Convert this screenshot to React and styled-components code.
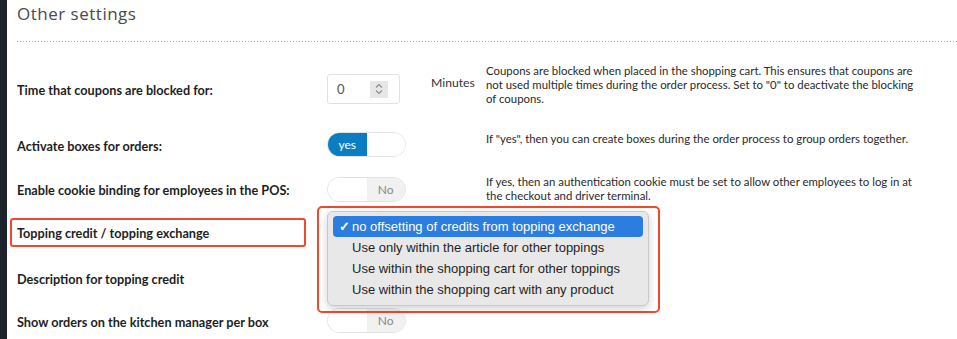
import React from "react";
import styled, { createGlobalStyle, css } from "styled-components";

const GlobalStyle = createGlobalStyle`
  html, body {
    margin: 0;
    padding: 0;
    background: #ffffff;
  }
  body {
    font-family: "Lato", "Liberation Sans", sans-serif;
    color: #222;
  }
`;

const SETTINGS = [
  {
    label: "Time that coupons are blocked for:",
    control: "number",
    unit: "Minutes",
    desc: 'Coupons are blocked when placed in the shopping cart. This ensures that coupons are not used multiple times during the order process. Set to "0" to deactivate the blocking of coupons.',
    height: 50,
  },
  {
    label: "Activate boxes for orders:",
    control: "on",
    desc: 'If "yes", then you can create boxes during the order process to group orders together.',
    height: 25,
  },
  {
    label: "Enable cookie binding for employees in the POS:",
    control: "off",
    desc: "If yes, then an authentication cookie must be set to allow other employees to log in at the checkout and driver terminal.",
    height: 25,
  },
  {
    label: "Topping credit / topping exchange",
    control: "select",
    highlight: true,
    height: 29,
  },
  {
    label: "Description for topping credit",
    control: null,
    height: 25,
  },
  {
    label: "Show orders on the kitchen manager per box",
    control: "off",
    height: 25,
  },
];

const OPTIONS = [
  "no offsetting of credits from topping exchange",
  "Use only within the article for other toppings",
  "Use within the shopping cart for other toppings",
  "Use within the shopping cart with any product",
];

const Spinner = () => (
  <StSpinner>
    <svg width="10" height="14" viewBox="0 0 10 14" fill="none">
      <path d="M2 5.5 L5 2.5 L8 5.5" stroke="#8a8a8a" strokeWidth="1.1" />
      <path d="M2 8.5 L5 11.5 L8 8.5" stroke="#8a8a8a" strokeWidth="1.1" />
    </svg>
  </StSpinner>
);

const Toggle = ({ on }) => (
  <StToggle>
    <StHalf $active={on}>{on ? "yes" : ""}</StHalf>
    <StHalf $off={!on}>{on ? "" : "No"}</StHalf>
  </StToggle>
);

const SelectPopup = () => (
  <StPopupMark>
    <StMenu>
      {OPTIONS.map((o, i) => (
        <StOption key={o} $selected={i === 0}>
          {i === 0 && <StCheck>✓</StCheck>}
          {o}
        </StOption>
      ))}
    </StMenu>
  </StPopupMark>
);

const renderControl = (control) => {
  if (control === "number")
    return (
      <StNumber>
        <span>0</span>
        <Spinner />
      </StNumber>
    );
  if (control === "on") return <Toggle on />;
  if (control === "off") return <Toggle on={false} />;
  if (control === "select") return <SelectPopup />;
  return null;
};

const App = () => {
  return (
    <StPage>
      <GlobalStyle />
      <StSidebar />
      <StMain>
        <StTitle>Other settings</StTitle>
        <StDivider />
        <StList>
          {SETTINGS.map((s) => (
            <StRow key={s.label} $height={s.height}>
              <StLabel $highlight={s.highlight}>{s.label}</StLabel>
              <StControl>{renderControl(s.control)}</StControl>
              <StUnit>{s.unit}</StUnit>
              <StDesc>{s.desc}</StDesc>
            </StRow>
          ))}
        </StList>
      </StMain>
    </StPage>
  );
};

export default App;

const StPage = styled.div`
  display: flex;
  width: 957px;
  height: 339px;
  overflow: hidden;
`;

const StSidebar = styled.div`
  width: 7px;
  flex-shrink: 0;
  background: #1d232b;
`;

const StMain = styled.div`
  flex: 1;
  padding-left: 10px;
`;

const StTitle = styled.div`
  font-family: "Open Sans", "Liberation Sans", sans-serif;
  font-size: 17px;
  letter-spacing: 0.5px;
  line-height: 20px;
  color: #4a4a4a;
  margin-top: 4px;
`;

const StDivider = styled.div`
  height: 1px;
  margin-top: 17px;
  background: repeating-linear-gradient(
    to right,
    #a8a8a8 0 1px,
    transparent 1px 3px
  );
`;

const StList = styled.div`
  display: flex;
  flex-direction: column;
  gap: 18px;
  margin-top: 22px;
`;

const StRow = styled.div`
  display: grid;
  grid-template-columns: 310px 104px 55px 436px;
  align-items: center;
  height: ${(p) => p.$height}px;
`;

const StLabel = styled.div`
  font-family: "Lato", sans-serif;
  font-weight: 700;
  font-size: 12.7px;
  color: #1e1e1e;
  padding-top: 2px;
  ${(p) =>
    p.$highlight &&
    css`
      margin-left: -7px;
      width: 296px;
      height: 29px;
      box-sizing: border-box;
      padding: 0 0 0 5px;
      border: 2px solid #f04a2c;
      border-radius: 3px;
      display: flex;
      align-items: center;
    `}
`;

const StControl = styled.div`
  position: relative;
  height: 100%;
  display: flex;
  align-items: center;
`;

const StUnit = styled.div`
  align-self: start;
  font-size: 12.2px;
  line-height: 16px;
  margin-top: 11px;
  color: #333;
`;

const StDesc = styled.div`
  align-self: start;
  font-size: 11.4px;
  line-height: 14px;
  margin-top: 0;
  color: #2a2a2a;
`;

const StNumber = styled.div`
  width: 73px;
  height: 30px;
  box-sizing: border-box;
  border: 1px solid #e1e1e1;
  border-radius: 3px;
  display: flex;
  align-items: center;
  padding-left: 9px;
  font-size: 13px;
  color: #555;

  span {
    width: 33px;
  }
`;

const StSpinner = styled.div`
  width: 18px;
  height: 17px;
  background: #e7e7e7;
  display: flex;
  align-items: center;
  justify-content: center;
`;

const StToggle = styled.div`
  width: 79px;
  height: 25px;
  box-sizing: border-box;
  border: 1px solid #e2e2e2;
  border-radius: 13px;
  overflow: hidden;
  display: flex;
`;

const StHalf = styled.div`
  width: 50%;
  display: flex;
  align-items: center;
  justify-content: center;
  font-size: 12px;
  background: ${(p) => (p.$active ? "#0a7dc3" : p.$off ? "#f1f1f1" : "#fff")};
  color: ${(p) => (p.$active ? "#fff" : "#888")};
`;

const StPopupMark = styled.div`
  position: absolute;
  left: -10px;
  top: -12px;
  width: 343px;
  height: 107px;
  box-sizing: border-box;
  border: 2px solid #f04a2c;
  border-radius: 5px;
  padding: 3px 9px 0 8px;
  z-index: 2;
`;

const StMenu = styled.div`
  box-sizing: border-box;
  height: 95px;
  padding: 4px 5px;
  background: #e8e8e8;
  border: 1px solid #c9c9c9;
  border-radius: 6px;
  box-shadow: 0 3px 10px rgba(0, 0, 0, 0.18);
`;

const StOption = styled.div`
  position: relative;
  height: 21px;
  line-height: 21px;
  padding-left: 19px;
  border-radius: 4px;
  font-family: "Liberation Sans", Arial, sans-serif;
  font-size: 13px;
  color: ${(p) => (p.$selected ? "#fff" : "#1f1f1f")};
  background: ${(p) => (p.$selected ? "#2c7de0" : "transparent")};
`;

const StCheck = styled.span`
  position: absolute;
  left: 6px;
  top: 0;
  font-weight: 700;
`;
